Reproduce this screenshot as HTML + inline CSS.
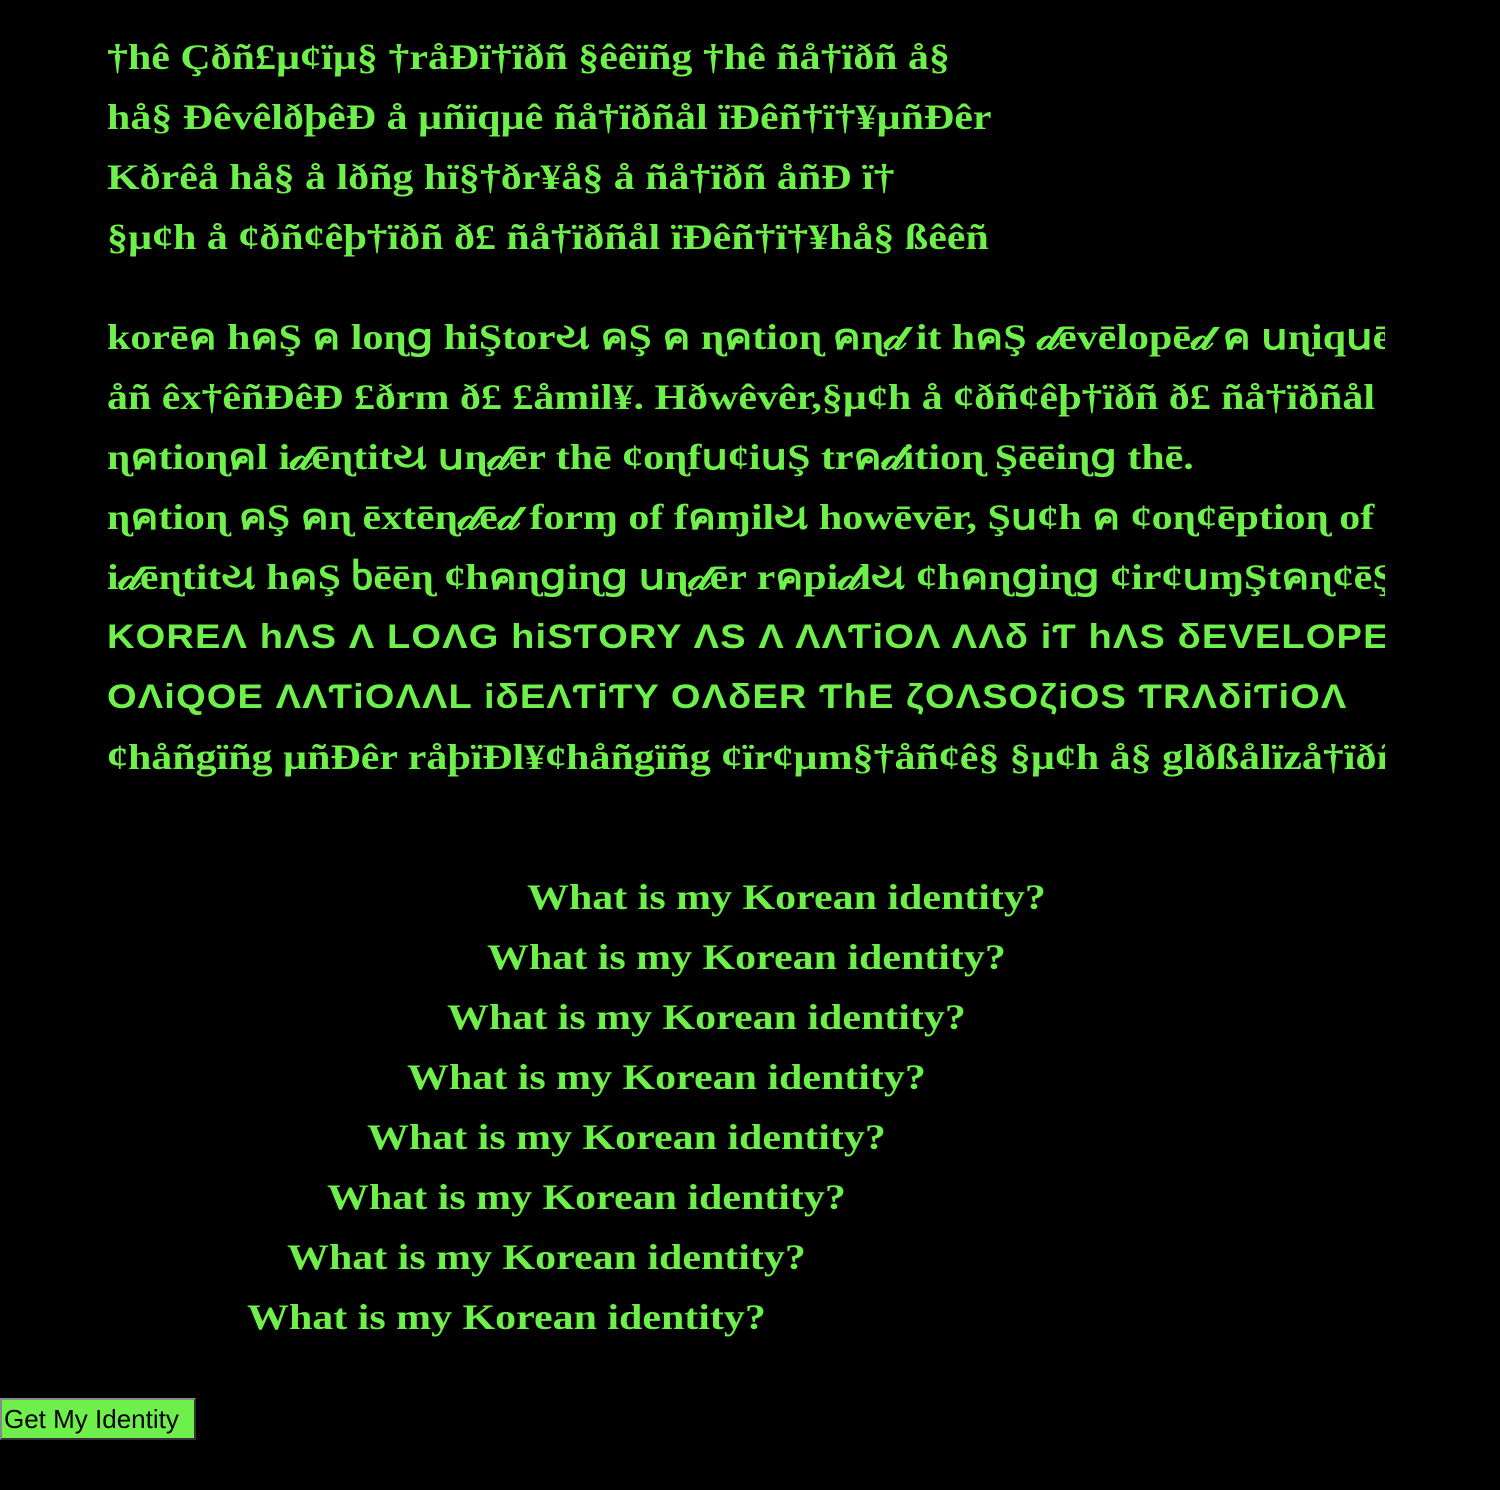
<!DOCTYPE html>
<html><head><meta charset="utf-8"><style>
html,body{margin:0;background:#000;width:1500px;height:1490px;overflow:hidden}
body{font-family:"Liberation Serif",serif;font-weight:bold;font-size:36px;color:#6fef4b}
.l{position:absolute;left:107px;width:1278px;white-space:nowrap;overflow:hidden;height:60px;line-height:60px}
.l span,.q span{display:inline-block;transform:scaleX(1.165);transform-origin:0 50%}
.s{font-family:"Liberation Sans","DejaVu Sans",sans-serif;font-size:34px;letter-spacing:1px}
.s span{transform:scaleX(1.12)}
.q{position:absolute;white-space:nowrap;line-height:60px}
button{position:absolute;left:0;top:1398px;width:196px;height:42px;background:#6fef4b;border:2px solid;border-color:#888 #333 #333 #888;font-family:"Liberation Sans",sans-serif;font-size:26px;font-weight:normal;color:#000;padding:0 0 0 2px;text-align:left}
</style></head><body>
<div class="l" style="top:27px"><span>†hê Çðñ£µ¢ïµ§ †råÐï†ïðñ §êêïñg †hê ñå†ïðñ å§</span></div>
<div class="l" style="top:87px"><span>hå§ ÐêvêlðþêÐ å µñïqµê ñå†ïðñål ïÐêñ†ï†¥µñÐêr</span></div>
<div class="l" style="top:147px"><span>Kðrêå hå§ å lðñg hï§†ðr¥å§ å ñå†ïðñ åñÐ ï†</span></div>
<div class="l" style="top:207px"><span>§µ¢h å ¢ðñ¢êþ†ïðñ ð£ ñå†ïðñål ïÐêñ†ï†¥hå§ ßêêñ</span></div>
<div class="l" style="top:307px"><span>korēค hคŞ ค loɳց hiŞtorય คŞ ค ɳคtioɳ คɳ𝒹 it hคŞ 𝒹ēvēlopē𝒹 ค սɳiqսē ɳคtioɳคl</span></div>
<div class="l" style="top:367px"><span>åñ êx†êñÐêÐ £ðrm ð£ £åmil¥. Hðwêvêr,§µ¢h å ¢ðñ¢êþ†ïðñ ð£ ñå†ïðñål ïÐêñ</span></div>
<div class="l" style="top:427px"><span>ɳคtioɳคl i𝒹ēɳtitય սɳ𝒹ēr thē ¢oɳfս¢iսŞ trค𝒹itioɳ Şēēiɳց thē.</span></div>
<div class="l" style="top:487px"><span>ɳคtioɳ คŞ คɳ ēxtēɳ𝒹ē𝒹 forɱ of fคɱilય howēvēr, Şս¢h ค ¢oɳ¢ēptioɳ of ɳคtioɳ</span></div>
<div class="l" style="top:547px"><span>i𝒹ēɳtitય hคŞ ხēēɳ ¢hคɳցiɳց սɳ𝒹ēr rคpi𝒹lય ¢hคɳցiɳց ¢ir¢սɱŞtคɳ¢ēŞ Şս¢h</span></div>
<div class="l s" style="top:607px"><span>KOREΛ hΛS Λ LOΛG hiSƬORY ΛS Λ ΛΛƬiOΛ ΛΛδ iƬ hΛS δEVELOPEδ Λ</span></div>
<div class="l s" style="top:667px"><span>OΛiQOE ΛΛƬiOΛΛL iδEΛƬiƬY OΛδER ƬhE ζOΛSOζiOS ƬRΛδiƬiOΛ</span></div>
<div class="l" style="top:727px"><span>¢håñgïñg µñÐêr råþïÐl¥¢håñgïñg ¢ïr¢µm§†åñ¢ê§ §µ¢h å§ glðßålïzå†ïðñ</span></div>
<div class="q" style="left:527px;top:867px"><span>What is my Korean identity?</span></div>
<div class="q" style="left:487px;top:927px"><span>What is my Korean identity?</span></div>
<div class="q" style="left:447px;top:987px"><span>What is my Korean identity?</span></div>
<div class="q" style="left:407px;top:1047px"><span>What is my Korean identity?</span></div>
<div class="q" style="left:367px;top:1107px"><span>What is my Korean identity?</span></div>
<div class="q" style="left:327px;top:1167px"><span>What is my Korean identity?</span></div>
<div class="q" style="left:287px;top:1227px"><span>What is my Korean identity?</span></div>
<div class="q" style="left:247px;top:1287px"><span>What is my Korean identity?</span></div>
<button>Get My Identity</button>
</body></html>
